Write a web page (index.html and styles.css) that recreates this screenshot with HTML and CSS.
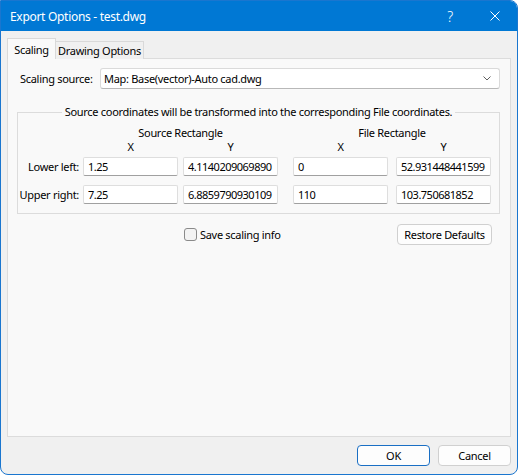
FILE: index.html
```html
<!DOCTYPE html>
<html>
<head>
    <meta charset="UTF-8">
    <title>Export Options - test.dwg</title>
    <link rel="stylesheet" href="styles.css">
</head>
<body>
    <div class="window">
        <div class="titlebar">
            <span class="title">Export Options - test.dwg</span>
            <div class="caption-buttons">
                <span class="caption-help">?</span>
                <span class="caption-close">
                    <svg viewBox="0 0 10 10" width="10" height="10">
                        <path d="M0.5 0.5L9.5 9.5M9.5 0.5L0.5 9.5" stroke="#fff" stroke-width="1"></path>
                    </svg>
                </span>
            </div>
        </div>

        <div class="content">
            <div class="tabs">
                <div class="tab active">Scaling</div>
                <div class="tab">Drawing Options</div>
            </div>

            <div class="panel">
                <div class="source-row">
                    <span class="source-label">Scaling source:</span>
                    <div class="combo">
                        <span class="combo-text">Map: Base(vector)-Auto cad.dwg</span>
                        <svg class="combo-arrow" viewBox="0 0 8 5" width="8" height="5">
                            <path d="M0.5 0.5L4 4L7.5 0.5" fill="none" stroke="#606060" stroke-width="1"></path>
                        </svg>
                    </div>
                </div>

                <fieldset class="group">
                    <legend class="group-title">Source coordinates will be transformed into the corresponding File coordinates.</legend>

                    <div class="coord-row head">
                        <div class="coord-label"></div>
                        <div class="pair-head">
                            <div class="pair-title">Source Rectangle</div>
                            <div class="pair">
                                <span class="axis">X</span>
                                <span class="axis">Y</span>
                            </div>
                        </div>
                        <div class="pair-head file">
                            <div class="pair-title">File Rectangle</div>
                            <div class="pair">
                                <span class="axis">X</span>
                                <span class="axis">Y</span>
                            </div>
                        </div>
                    </div>

                    <div class="coord-row">
                        <div class="coord-label">Lower left:</div>
                        <div class="pair">
                            <input class="field" type="text" value="1.25">
                            <input class="field" type="text" value="4.1140209069890">
                        </div>
                        <div class="pair file">
                            <input class="field" type="text" value="0">
                            <input class="field" type="text" value="52.931448441599">
                        </div>
                    </div>

                    <div class="coord-row">
                        <div class="coord-label">Upper right:</div>
                        <div class="pair">
                            <input class="field" type="text" value="7.25">
                            <input class="field" type="text" value="6.8859790930109">
                        </div>
                        <div class="pair file">
                            <input class="field" type="text" value="110">
                            <input class="field" type="text" value="103.750681852">
                        </div>
                    </div>
                </fieldset>

                <div class="options-row">
                    <label class="check">
                        <span class="checkbox"></span>
                        Save scaling info
                    </label>
                    <button class="button restore">Restore Defaults</button>
                </div>
            </div>
        </div>

        <div class="footer">
            <button class="button default">OK</button>
            <button class="button">Cancel</button>
        </div>
    </div>
</body>
</html>
```

FILE: styles.css
```css
body {
    margin: 0;
    background-color: #fff;
    font-family: "Noto Sans", "Open Sans", sans-serif;
    font-size: 11px;
    letter-spacing: -0.3px;
    color: #000;
}

.window {
    width: 518px;
    height: 475px;
    box-sizing: border-box;
    display: flex;
    flex-direction: column;
    border: 1px solid #1a76cf;
    border-radius: 0 8px 8px 8px;
    background-color: #f0f0f0;
    overflow: hidden;
}

.titlebar {
    flex: none;
    display: flex;
    align-items: center;
    height: 30px;
    padding-left: 9px;
    background-color: #0078d4;
    color: #fff;
    font-size: 12px;
}

.caption-buttons {
    display: flex;
    align-items: center;
    margin-left: auto;
    height: 100%;
}

.caption-help {
    width: 46px;
    text-align: center;
    font-size: 14px;
    font-weight: 300;
}

.caption-close {
    display: flex;
    align-items: center;
    justify-content: center;
    width: 44px;
    height: 100%;
}

.content {
    flex: 1;
    display: flex;
    flex-direction: column;
    padding: 7px 6px 0;
}

.tabs {
    display: flex;
    align-items: flex-end;
    height: 21px;
    margin-bottom: -1px;
    position: relative;
    z-index: 1;
}

.tab {
    box-sizing: border-box;
    display: flex;
    align-items: center;
    justify-content: center;
    width: 88px;
    height: 18px;
    border: 1px solid #d9d9d9;
    border-left: none;
    border-bottom: none;
    background-color: #f0f0f0;
}

.tab.active {
    height: 21px;
    width: 49px;
    border-left: 1px solid #d9d9d9;
    background-color: #f9f9f9;
}

.panel {
    flex: 1;
    display: flex;
    flex-direction: column;
    padding: 9px 10px 0 9px;
    border: 1px solid #dcdcdc;
    background-color: #f9f9f9;
}

.source-row {
    display: flex;
    align-items: center;
    padding-left: 3px;
}

.source-label {
    width: 80px;
}

.combo {
    flex: 1;
    box-sizing: border-box;
    display: flex;
    align-items: center;
    height: 21px;
    padding: 0 8px 0 3px;
    border: 1px solid #dadada;
    border-bottom-color: #b8b8b8;
    border-radius: 3px;
    background-color: #fff;
}

.combo-arrow {
    margin-left: auto;
}

.group {
    margin: 16px 0 0;
    padding: 7px 0 9px;
    border: 1px solid #dcdcdc;
    min-inline-size: 0;
}

.group-title {
    margin: 0 auto;
    padding: 0 3px;
    line-height: 14px;
}

.coord-row {
    display: flex;
    align-items: center;
}

.coord-row + .coord-row {
    margin-top: 9px;
}

.coord-row.head + .coord-row {
    margin-top: 3px;
}

.coord-label {
    width: 61px;
    margin-right: 4px;
    text-align: right;
    white-space: nowrap;
}

.pair {
    display: flex;
    gap: 5px;
}

.pair.file {
    margin-left: 15px;
    gap: 8px;
}

.pair-head {
    display: flex;
    flex-direction: column;
    line-height: 14px;
}

.pair-head.file {
    margin-left: 15px;
}

.pair-head.file .pair {
    gap: 8px;
}

.pair-title {
    text-align: center;
}

.axis {
    width: 95px;
    text-align: center;
}

.field {
    box-sizing: border-box;
    width: 95px;
    height: 19px;
    margin: 0;
    padding: 0 0 0 4px;
    border: 1px solid #dedede;
    border-bottom-color: #a0a0a0;
    border-radius: 2px;
    background-color: #fff;
    font: inherit;
    letter-spacing: -0.5px;
    color: #000;
    outline: none;
}

.options-row {
    display: flex;
    align-items: center;
    margin-top: 10px;
    padding-left: 167px;
}

.check {
    display: flex;
    align-items: center;
    gap: 3px;
}

.checkbox {
    box-sizing: border-box;
    width: 13px;
    height: 13px;
    border: 1px solid #8a8a8a;
    border-radius: 3px;
    background-color: #f3f3f3;
}

.button {
    box-sizing: border-box;
    width: 73px;
    height: 21px;
    padding: 0;
    border: 1px solid #d0d0d0;
    border-radius: 4px;
    background-color: #fdfdfd;
    font: inherit;
    letter-spacing: inherit;
    color: #000;
}

.button.restore {
    width: 95px;
    margin-left: auto;
    margin-right: 8px;
}

.button.default {
    border-color: #1a6fc4;
}

.footer {
    flex: none;
    display: flex;
    justify-content: flex-end;
    gap: 8px;
    padding: 8px 6px;
}
```
